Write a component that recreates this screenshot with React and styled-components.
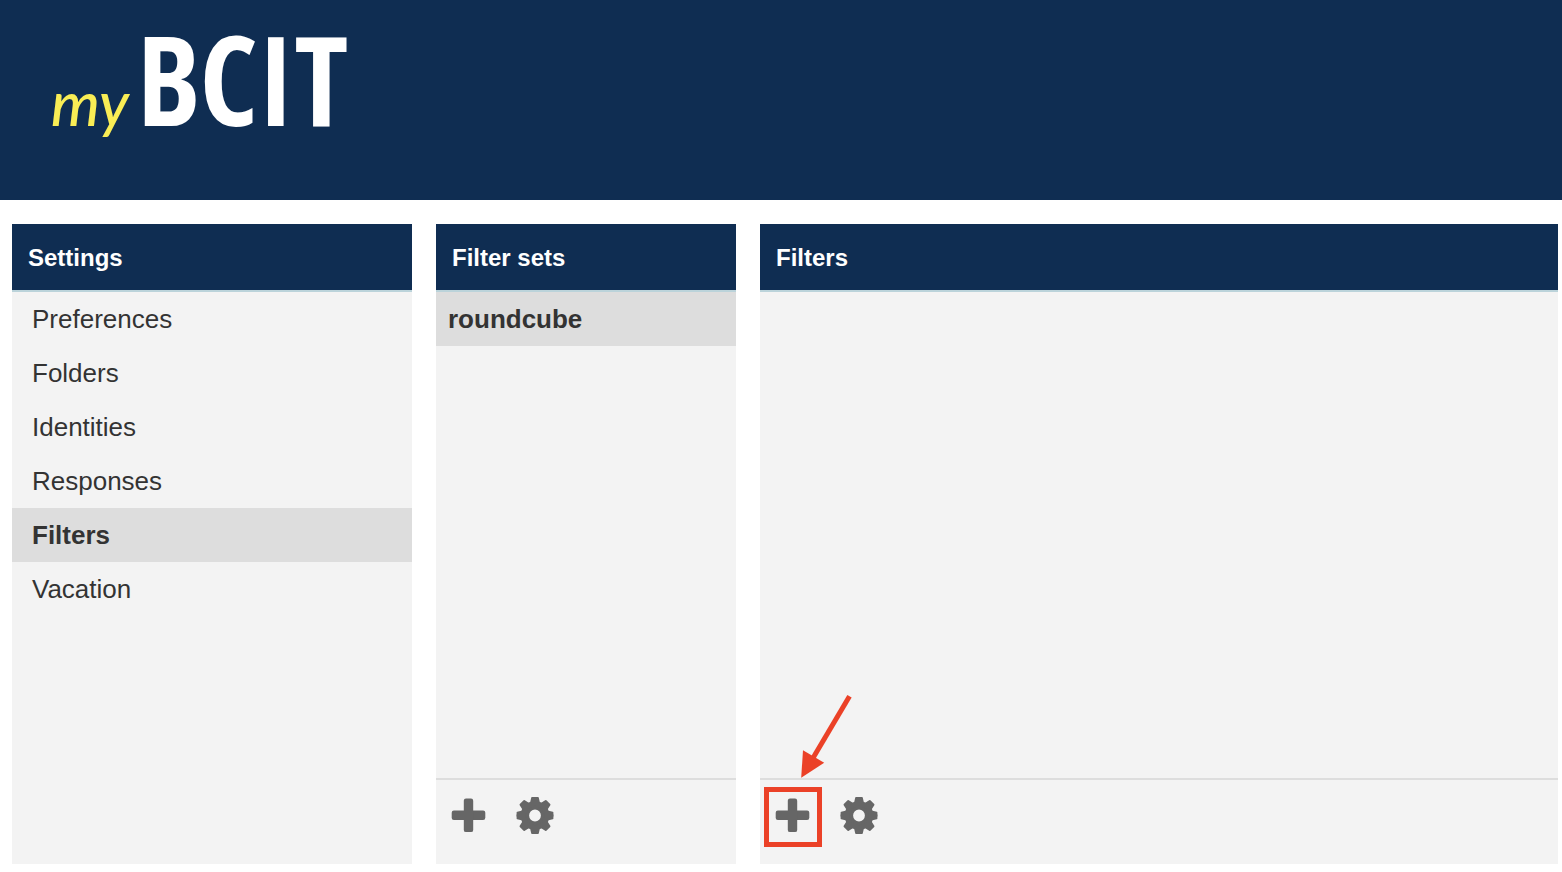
import React from "react";
import styled, { createGlobalStyle } from "styled-components";

const navy = "#0f2d52";
const annotationRed = "#eb4127";

const GlobalStyle = createGlobalStyle`
  *, *::before, *::after { box-sizing: border-box; }
  body {
    margin: 0;
    background: #fff;
    color: #333;
    font-family: "Liberation Sans", Arial, Helvetica, sans-serif;
  }
`;

const Page = styled.div`
  display: flex;
  flex-direction: column;
  min-height: 100vh;
`;

const Banner = styled.header`
  flex: none;
  min-height: 200px;
  padding: 0 51px;
  background: ${navy};
`;

const Logo = styled.h1`
  display: flex;
  align-items: baseline;
  gap: 8px;
  margin: 0;
  font-weight: 400;
`;

const LogoPrefix = styled.span`
  color: #f9ed55;
  font-family: Lato, sans-serif;
  font-size: 62px;
  line-height: 76px;
  font-style: italic;
  font-weight: 500;
`;

const LogoName = styled.span`
  color: #fff;
  font-family: "Open Sans Condensed", "Arial Narrow", sans-serif;
  font-size: 124px;
  line-height: 156px;
  font-weight: 700;
`;

const Columns = styled.main`
  flex: 1;
  display: grid;
  grid-template-columns: 400px 300px minmax(0, 1fr);
  gap: 24px;
  padding: 24px 4px 8px 12px;
`;

const Panel = styled.section`
  display: flex;
  flex-direction: column;
  background: #f3f3f3;
`;

const PanelTitle = styled.h2`
  margin: 0;
  padding: 2px 16px 0;
  border-bottom: 2px solid #bbd3da;
  background: ${navy};
  color: #fff;
  font-size: 24px;
  line-height: 64px;
  font-weight: 700;
`;

const List = styled.ul`
  flex: 1;
  margin: 0;
  padding: 0;
  list-style: none;
`;

const ListLink = styled.a`
  display: block;
  padding: 0 ${(p) => (p.$inset ? "20px" : "12px")};
  background: ${(p) => (p.$selected ? "#ddd" : "transparent")};
  color: #333;
  font-size: 26px;
  line-height: 54px;
  font-weight: ${(p) => (p.$selected ? 700 : 400)};
  text-decoration: none;
`;

const ActionBar = styled.footer`
  display: flex;
  gap: 26px;
  padding: 16px 12px 28px;
  border-top: 2px solid #ddd;
`;

const IconButton = styled.button`
  position: relative;
  width: 40px;
  height: 40px;
  padding: 0;
  border: 0;
  background: none;
  color: #666;
  cursor: pointer;

  > svg { display: block; }
`;

const Highlight = styled.span`
  position: absolute;
  top: -9px;
  left: -8px;
  width: 58px;
  height: 60px;
  border: 5px solid ${annotationRed};
  pointer-events: none;
`;

const Arrow = styled.svg`
  position: absolute;
  top: -102px;
  left: 28px;
  pointer-events: none;
`;

function PlusIcon() {
  return (
    <svg width="40" height="40" viewBox="0 0 40 40" fill="currentColor" aria-hidden="true">
      <rect x="3.7" y="14.5" width="33.6" height="9.5" rx="2.2" />
      <rect x="15.8" y="2.5" width="9.4" height="33.6" rx="2.2" />
    </svg>
  );
}

function GearIcon() {
  return (
    <svg width="40" height="40" viewBox="0 0 40 40" fill="currentColor" aria-hidden="true">
      <g transform="translate(21 19.5)">
        <circle r="9.4" fill="none" stroke="currentColor" strokeWidth="7" />
        {[0, 90, 180, 270].map((angle) => (
          <path
            key={angle}
            transform={`rotate(${angle})`}
            d="M-1-18.4H3.1Q3.7-18.4 3.8-17.8L4.8-13.6 6.6-12.9 10.2-15.3Q10.8-15.7 11.4-15.2L15.2-11.4Q15.7-10.8 15.3-10.2L12.9-6.6 13.6-4.8 17.8-3.8Q18.4-3.7 18.4-3.1V1H10L7-7-1-10Z"
          />
        ))}
      </g>
    </svg>
  );
}

function Actions({ subject, highlightAdd }) {
  return (
    <ActionBar>
      <IconButton type="button" aria-label={`Add ${subject}`}>
        <PlusIcon />
        {highlightAdd && (
          <>
            <Highlight />
            <Arrow width="54" height="86" viewBox="0 0 54 86" aria-hidden="true">
              <path d="M49.5 2.2 13 64" stroke={annotationRed} strokeWidth="5" />
              <path d="M1.2 83.8 3 56.2 24.2 68.8Z" fill={annotationRed} />
            </Arrow>
          </>
        )}
      </IconButton>
      <IconButton type="button" aria-label={`More ${subject} actions`}>
        <GearIcon />
      </IconButton>
    </ActionBar>
  );
}

const sections = ["Preferences", "Folders", "Identities", "Responses", "Filters", "Vacation"];

export default function App() {
  return (
    <>
      <GlobalStyle />
      <Page>
        <Banner>
          <Logo>
            <LogoPrefix>my</LogoPrefix>
            <LogoName>BCIT</LogoName>
          </Logo>
        </Banner>
        <Columns>
          <Panel>
            <PanelTitle>Settings</PanelTitle>
            <List>
              {sections.map((name) => (
                <li key={name}>
                  <ListLink href="#" $inset $selected={name === "Filters"}>{name}</ListLink>
                </li>
              ))}
            </List>
          </Panel>
          <Panel>
            <PanelTitle>Filter sets</PanelTitle>
            <List>
              <li>
                <ListLink href="#" $selected>roundcube</ListLink>
              </li>
            </List>
            <Actions subject="filter set" />
          </Panel>
          <Panel>
            <PanelTitle>Filters</PanelTitle>
            <List />
            <Actions subject="filter" highlightAdd />
          </Panel>
        </Columns>
      </Page>
    </>
  );
}
